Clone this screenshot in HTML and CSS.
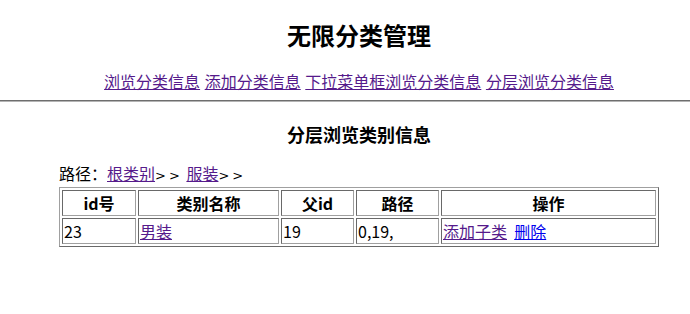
FILE: index.html
```html
<!DOCTYPE html>
<html lang="zh-CN">
<head>
    <meta charset="UTF-8">
    <title>无限分类管理</title>
    <link rel="stylesheet" href="styles.css">
</head>
<body>
<div class="page">
    <h2 class="title">无限分类管理</h2>
    <div class="nav">
        <a href="#" class="seen">浏览分类信息</a>
        <a href="#" class="seen">添加分类信息</a>
        <a href="#" class="seen">下拉菜单框浏览分类信息</a>
        <a href="#" class="seen">分层浏览分类信息</a>
    </div>
    <hr class="rule">
    <h3 class="subtitle">分层浏览类别信息</h3>

    <div class="box">
        <div class="path">路径：<a href="#" class="seen">根类别</a><span class="gt">&gt;&gt;</span> <a href="#" class="seen">服装</a><span class="gt">&gt;&gt;</span></div>
        <table class="list">
            <tr>
                <th class="c-id">id号</th>
                <th class="c-name">类别名称</th>
                <th class="c-pid">父id</th>
                <th class="c-path">路径</th>
                <th class="c-op">操作</th>
            </tr>
            <tr>
                <td>23</td>
                <td><a href="#" class="seen">男装</a></td>
                <td>19</td>
                <td>0,19,</td>
                <td><a href="#" class="seen">添加子类</a>&nbsp; <a href="#">删除</a></td>
            </tr>
        </table>
    </div>
</div>
</body>
</html>
```

FILE: styles.css
```css
html, body {
  margin: 0;
  padding: 0;
  overflow: hidden;
  background: #fff;
}

body {
  font-family: "Noto Sans CJK SC", "Noto Sans", sans-serif;
  font-size: 16px;
  color: #000;
}

a {
  color: #0000ee;
}

a.seen {
  color: #551a8b;
}

.page {
  width: 718px;
  text-align: center;
}

.title {
  font-size: 24px;
  line-height: 32px;
  margin: 19px 0 0;
}

.nav {
  line-height: 22px;
  margin-top: 19px;
  word-spacing: 1px;
}

.rule {
  margin: 8px 0 0;
  height: 0;
  border: none;
  border-top: 1px solid #6e6e6e;
  border-bottom: 1px solid #b4b4b4;
}

.subtitle {
  font-size: 18px;
  line-height: 24px;
  margin: 20px 0 0;
}

.box {
  width: 600px;
  margin: 0 auto;
  text-align: left;
}

.path {
  line-height: 22px;
  margin-top: 16px;
}

.gt {
  letter-spacing: 3px;
  font-family: "DejaVu Sans", sans-serif;
  font-size: 13px;
}

/* table border=1 look */
.list {
  width: 600px;
  table-layout: fixed;
  border-collapse: separate;
  border-spacing: 2px;
  border: 1px solid;
  border-color: #a0a0a0 #696969 #696969 #a0a0a0;
}

.list th,
.list td {
  border: 1px solid;
  border-color: #696969 #a0a0a0 #a0a0a0 #696969;
  padding: 1px;
  line-height: 22px;
  text-align: left;
}

.list th {
  text-align: center;
  font-weight: bold;
}

.c-id { width: 70px; }
.c-name { width: 137px; }
.c-pid { width: 69px; }
.c-path { width: 79px; }
```
